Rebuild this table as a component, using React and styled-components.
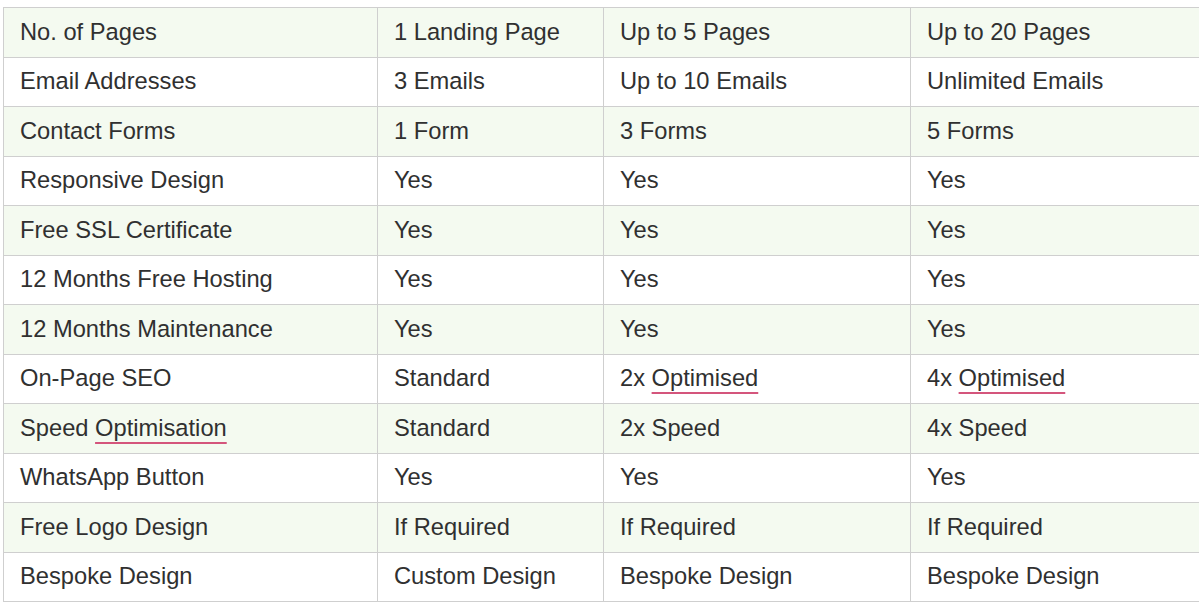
import React from 'react';
import styled, { createGlobalStyle } from 'styled-components';

const GlobalStyle = createGlobalStyle`
  body {
    margin: 0;
    background: #ffffff;
    font-family: "Liberation Sans", Arial, sans-serif;
  }
`;

const widths = [374, 226, 307, 288];

const rows = [
  ['No. of Pages', '1 Landing Page', 'Up to 5 Pages', 'Up to 20 Pages'],
  ['Email Addresses', '3 Emails', 'Up to 10 Emails', 'Unlimited Emails'],
  ['Contact Forms', '1 Form', '3 Forms', '5 Forms'],
  ['Responsive Design', 'Yes', 'Yes', 'Yes'],
  ['Free SSL Certificate', 'Yes', 'Yes', 'Yes'],
  ['12 Months Free Hosting', 'Yes', 'Yes', 'Yes'],
  ['12 Months Maintenance', 'Yes', 'Yes', 'Yes'],
  ['On-Page SEO', 'Standard', ['2x ', 'Optimised'], ['4x ', 'Optimised']],
  [['Speed ', 'Optimisation'], 'Standard', '2x Speed', '4x Speed'],
  ['WhatsApp Button', 'Yes', 'Yes', 'Yes'],
  ['Free Logo Design', 'If Required', 'If Required', 'If Required'],
  ['Bespoke Design', 'Custom Design', 'Bespoke Design', 'Bespoke Design'],
];

const Page = styled.div`
  padding: 7px 4px 0 3px;
`;

const Table = styled.table`
  width: 1195px;
  border-collapse: collapse;
  table-layout: fixed;
  color: #303030;
  font-size: 23.7px;
`;

const Col = styled.col`
  width: ${(p) => p.$w}px;
`;

const Row = styled.tr`
  background: ${(p) => (p.$striped ? '#f4faf0' : '#ffffff')};
`;

const Cell = styled.td`
  height: 48.5px;
  padding: 0 16px;
  border: 1px solid #cfcfcf;
  white-space: nowrap;
  vertical-align: middle;
  &:last-child {
    border-right: none;
  }
`;

const Misspelt = styled.span`
  text-decoration: underline;
  text-decoration-color: #d4557c;
  text-decoration-thickness: 2px;
  text-underline-offset: 6px;
`;

function CellText({ value }) {
  if (Array.isArray(value)) {
    return (
      <>
        {value[0]}
        <Misspelt>{value[1]}</Misspelt>
      </>
    );
  }
  return value;
}

export default function App() {
  return (
    <Page>
      <GlobalStyle />
      <Table>
        <colgroup>
          {widths.map((w, i) => (
            <Col key={i} $w={w} />
          ))}
        </colgroup>
        <tbody>
          {rows.map((r, i) => (
            <Row key={i} $striped={i % 2 === 0}>
              {r.map((c, j) => (
                <Cell key={j}>
                  <CellText value={c} />
                </Cell>
              ))}
            </Row>
          ))}
        </tbody>
      </Table>
    </Page>
  );
}
